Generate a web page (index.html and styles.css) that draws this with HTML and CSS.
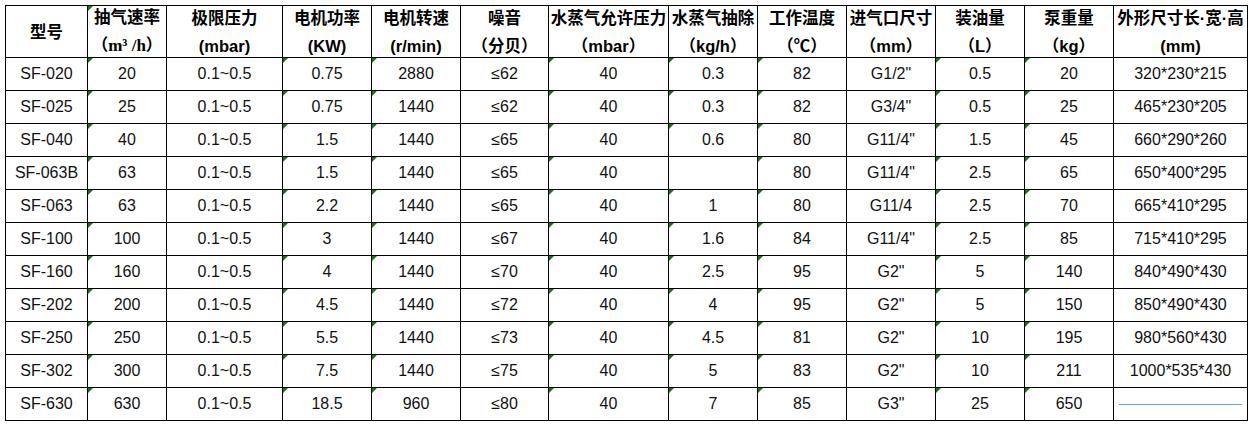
FILE: index.html
```html
<!DOCTYPE html>
<html lang="zh">
<head>
<meta charset="utf-8">
<title>真空泵参数表</title>
<link rel="stylesheet" href="styles.css">
</head>
<body>
<div class="wrap">
  <div class="sheet">
    <div class="c h"><span>型号</span></div>
    <div class="c h mk"><span>抽气速率</span><span>（<i class="serif">m³ /h</i>）</span></div>
    <div class="c h"><span>极限压力</span><span>(mbar)</span></div>
    <div class="c h"><span>电机功率</span><span>(KW)</span></div>
    <div class="c h"><span>电机转速</span><span>(r/min)</span></div>
    <div class="c h"><span>噪音</span><span>（分贝）</span></div>
    <div class="c h"><span>水蒸气允许压力</span><span>（mbar）</span></div>
    <div class="c h"><span>水蒸气抽除</span><span>（kg/h）</span></div>
    <div class="c h"><span>工作温度</span><span>（℃）</span></div>
    <div class="c h"><span>进气口尺寸</span><span>（mm）</span></div>
    <div class="c h"><span>装油量</span><span>（L）</span></div>
    <div class="c h"><span>泵重量</span><span>（kg）</span></div>
    <div class="c h"><span>外形尺寸长·宽·高</span><span>(mm)</span></div>

    <div class="c">SF-020</div><div class="c mk">20</div><div class="c">0.1~0.5</div><div class="c mk">0.75</div><div class="c mk">2880</div><div class="c">≤62</div><div class="c mk">40</div><div class="c mk">0.3</div><div class="c mk">82</div><div class="c">G1/2"</div><div class="c mk">0.5</div><div class="c mk">20</div><div class="c">320*230*215</div>

    <div class="c">SF-025</div><div class="c mk">25</div><div class="c">0.1~0.5</div><div class="c mk">0.75</div><div class="c mk">1440</div><div class="c">≤62</div><div class="c mk">40</div><div class="c mk">0.3</div><div class="c mk">82</div><div class="c">G3/4"</div><div class="c mk">0.5</div><div class="c mk">25</div><div class="c">465*230*205</div>

    <div class="c">SF-040</div><div class="c mk">40</div><div class="c">0.1~0.5</div><div class="c mk">1.5</div><div class="c mk">1440</div><div class="c">≤65</div><div class="c mk">40</div><div class="c mk">0.6</div><div class="c mk">80</div><div class="c">G11/4"</div><div class="c mk">1.5</div><div class="c mk">45</div><div class="c">660*290*260</div>

    <div class="c">SF-063B</div><div class="c mk">63</div><div class="c">0.1~0.5</div><div class="c mk">1.5</div><div class="c mk">1440</div><div class="c">≤65</div><div class="c mk">40</div><div class="c"></div><div class="c mk">80</div><div class="c">G11/4"</div><div class="c mk">2.5</div><div class="c mk">65</div><div class="c">650*400*295</div>

    <div class="c">SF-063</div><div class="c mk">63</div><div class="c">0.1~0.5</div><div class="c mk">2.2</div><div class="c mk">1440</div><div class="c">≤65</div><div class="c mk">40</div><div class="c mk">1</div><div class="c mk">80</div><div class="c">G11/4</div><div class="c mk">2.5</div><div class="c mk">70</div><div class="c">665*410*295</div>

    <div class="c">SF-100</div><div class="c mk">100</div><div class="c">0.1~0.5</div><div class="c mk">3</div><div class="c mk">1440</div><div class="c">≤67</div><div class="c mk">40</div><div class="c mk">1.6</div><div class="c mk">84</div><div class="c">G11/4"</div><div class="c mk">2.5</div><div class="c mk">85</div><div class="c">715*410*295</div>

    <div class="c">SF-160</div><div class="c mk">160</div><div class="c">0.1~0.5</div><div class="c mk">4</div><div class="c mk">1440</div><div class="c">≤70</div><div class="c mk">40</div><div class="c mk">2.5</div><div class="c mk">95</div><div class="c">G2"</div><div class="c mk">5</div><div class="c mk">140</div><div class="c">840*490*430</div>

    <div class="c">SF-202</div><div class="c mk">200</div><div class="c">0.1~0.5</div><div class="c mk">4.5</div><div class="c mk">1440</div><div class="c">≤72</div><div class="c mk">40</div><div class="c mk">4</div><div class="c mk">95</div><div class="c">G2"</div><div class="c mk">5</div><div class="c mk">150</div><div class="c">850*490*430</div>

    <div class="c">SF-250</div><div class="c mk">250</div><div class="c">0.1~0.5</div><div class="c mk">5.5</div><div class="c mk">1440</div><div class="c">≤73</div><div class="c mk">40</div><div class="c mk">4.5</div><div class="c mk">81</div><div class="c">G2"</div><div class="c mk">10</div><div class="c mk">195</div><div class="c">980*560*430</div>

    <div class="c">SF-302</div><div class="c mk">300</div><div class="c">0.1~0.5</div><div class="c mk">7.5</div><div class="c mk">1440</div><div class="c">≤75</div><div class="c mk">40</div><div class="c mk">5</div><div class="c mk">83</div><div class="c">G2"</div><div class="c mk">10</div><div class="c mk">211</div><div class="c">1000*535*430</div>

    <div class="c">SF-630</div><div class="c mk">630</div><div class="c">0.1~0.5</div><div class="c mk">18.5</div><div class="c mk">960</div><div class="c">≤80</div><div class="c mk">40</div><div class="c mk">7</div><div class="c mk">85</div><div class="c">G3"</div><div class="c mk">25</div><div class="c mk">650</div><div class="c line"><span class="rule"></span></div>
  </div>
</div>
</body>
</html>
```

FILE: styles.css
```css
html, body {
  margin: 0;
  padding: 0;
  background: #fff;
}

.wrap {
  padding: 5px 0 0 5px;
}

.sheet {
  display: grid;
  grid-template-columns: 81px 78px 115px 88px 88px 87px 119px 88px 88px 88px 88px 88px 133px;
  grid-template-rows: 51px repeat(11, 32px);
  gap: 1px;
  padding: 1px;
  background: #000;
  width: max-content;
  font-family: "Liberation Sans", Arial, "Noto Sans CJK SC", sans-serif;
  font-size: 16px;
  color: #111;
}

.c {
  position: relative;
  background: #fff;
  display: flex;
  align-items: center;
  justify-content: center;
  text-align: center;
  white-space: nowrap;
}

.h {
  flex-direction: column;
  font-weight: bold;
  font-size: 16.5px;
  line-height: 28px;
  color: #000;
}

.h span {
  display: block;
}

.serif {
  font-style: normal;
  font-family: "Liberation Serif", "Times New Roman", serif;
  font-weight: bold;
  font-size: 17px;
}

.mk::before {
  content: "";
  position: absolute;
  left: 0;
  top: 0;
  width: 0;
  height: 0;
  border-top: 5px solid #1f6e1a;
  border-right: 5px solid transparent;
}

.line {
  justify-content: flex-start;
}

.rule {
  display: block;
  margin-left: 5px;
  width: 123px;
  height: 1px;
  background: #6f9fbf;
}
```
